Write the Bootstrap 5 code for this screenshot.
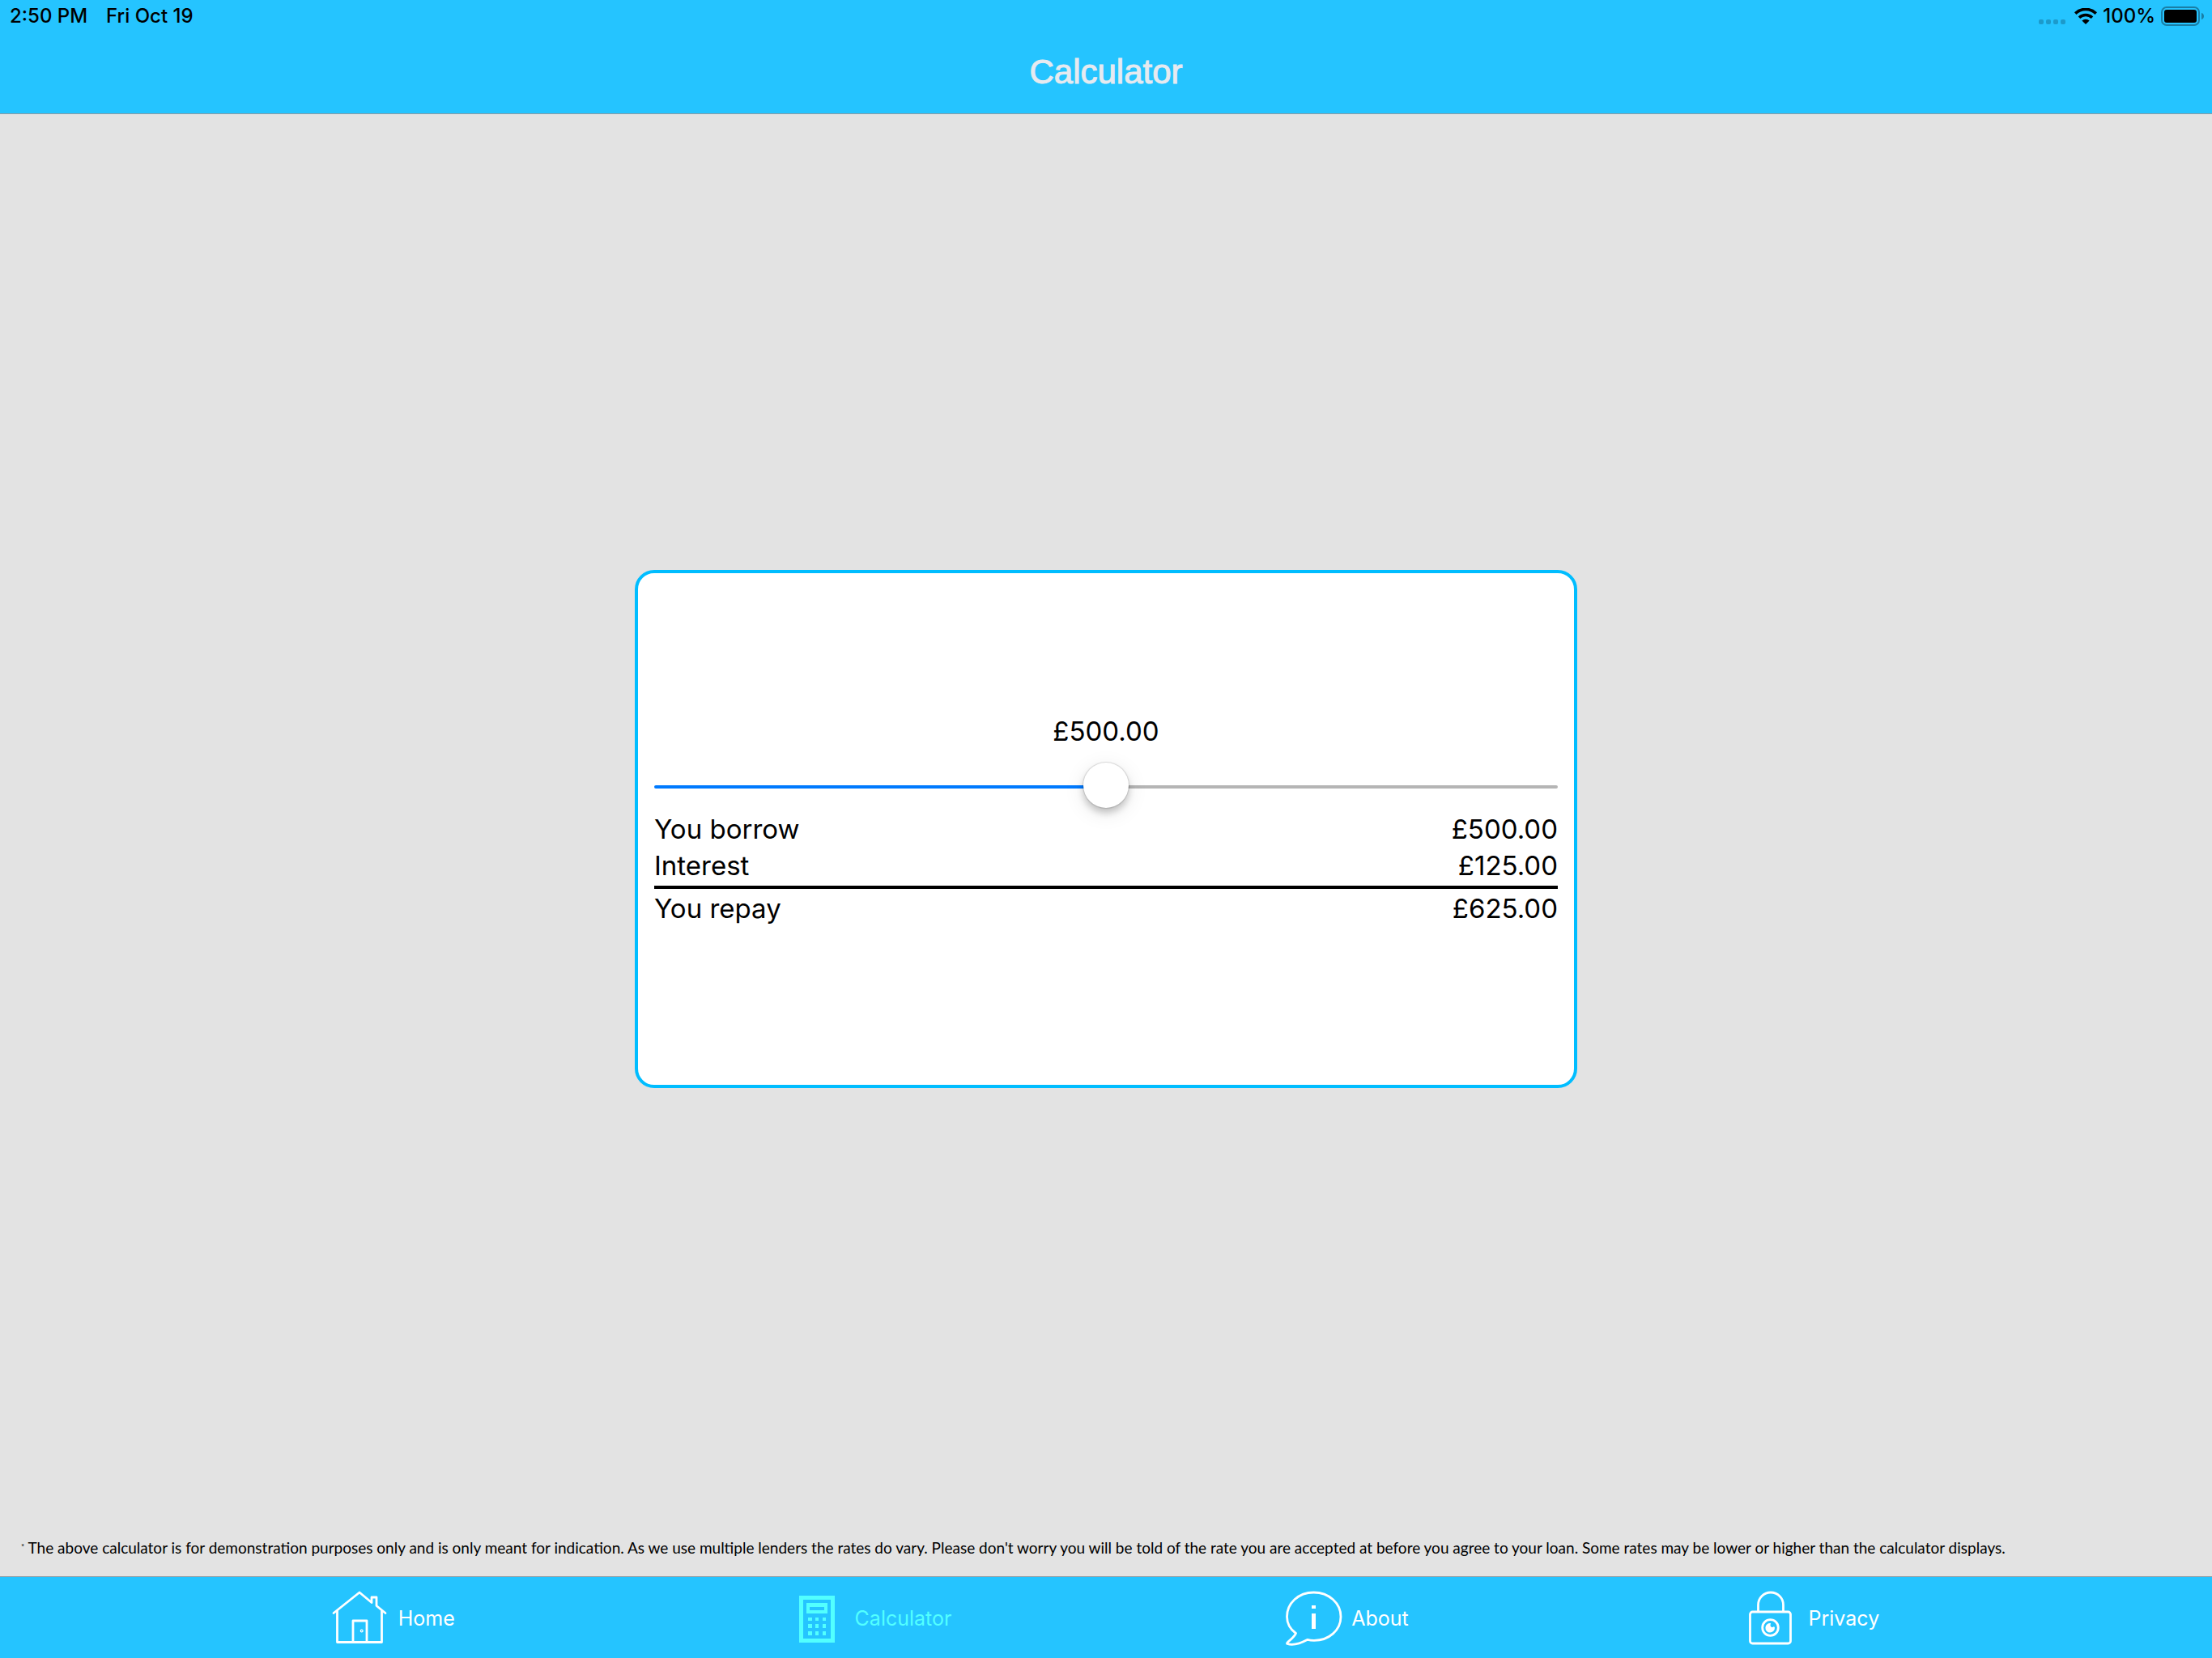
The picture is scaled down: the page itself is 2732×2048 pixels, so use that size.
<!DOCTYPE html>
<html lang="en">
<head>
<meta charset="utf-8">
<meta name="viewport" content="width=device-width, initial-scale=1">
<title>Calculator</title>
<link href="https://cdn.jsdelivr.net/npm/bootstrap@5.3.0/dist/css/bootstrap.min.css" rel="stylesheet">
<style>
  body { background: #e3e3e3; color: #000; font-family: Inter, "Liberation Sans", sans-serif; }
  .bar-blue { background: #25c4ff; }
  .app-header { border-bottom: 1px solid #8d9ba2; }
  .status-line { height: 40px; padding: 0 9px 0 12px; font-size: 24px; line-height: 40px; font-weight: 500; }
  .status-clock { gap: 23px; }
  .status-icons { gap: 7px; }
  .app-title { padding: 25px 0 27px; font-family: "Liberation Sans", sans-serif; font-size: 42px; line-height: 48px; font-weight: 400; color: #e6eaf0; -webkit-text-stroke: 1px #e6eaf0; }
  .stage { padding-top: 8px; }
  .loan-card { width: 1164px; max-width: 100%; min-height: 640px; padding: 0 20px 23px; border: 4px solid #00bdff; border-radius: 24px; font-size: 33px; line-height: 45px; }
  .loan-slider { height: 60px; margin-top: 16px; padding: 0; }
  .loan-slider::-webkit-slider-runnable-track { height: 4px; border-radius: 2px; background: linear-gradient(to right, #007aff var(--fill), #b5b5b5 var(--fill)); }
  .loan-slider::-webkit-slider-thumb, .loan-slider::-webkit-slider-thumb:active { width: 56px; height: 56px; margin-top: -28px; border-radius: 50%; background: #fff; box-shadow: 0 0 1px 1px rgba(0,0,0,.12), 0 6px 8px rgba(0,0,0,.2), 0 6px 26px rgba(0,0,0,.1); }
  .loan-slider::-moz-range-track { height: 4px; background: linear-gradient(to right, #007aff var(--fill), #b5b5b5 var(--fill)); }
  .loan-slider::-moz-range-thumb { width: 56px; height: 56px; border-radius: 50%; background: #fff; box-shadow: 0 6px 8px rgba(0,0,0,.2); }
  .loan-table th { font-weight: 400; }
  .loan-table th, .loan-table td { padding: 0; }
  .loan-table tbody tr:last-child > * { padding-bottom: 2px; }
  .loan-table tfoot > tr > * { border-top: 4px solid #000; padding-top: 2px; }
  .disclaimer { margin: 0; padding: 1px 26px 23px; font-family: Lato, "Noto Sans", sans-serif; font-size: 19px; line-height: 24px; }
  .disclaimer sup { font-size: 10px; }
  .tab-bar { border-top: 1px solid #8d9ba2; }
  .tab-link { height: 100px; padding: 2px 2px 0 0; gap: 11px; color: #fff; font-size: 25px; line-height: 32px; font-weight: 400; }
  .tab-link.active { color: #52ffff; }
</style>
<script src="https://cdn.jsdelivr.net/npm/bootstrap@5.3.0/dist/js/bootstrap.bundle.min.js"></script>
</head>
<body class="d-flex flex-column min-vh-100">
  <header class="app-header bar-blue">
    <div class="status-line d-flex justify-content-between">
      <div class="status-clock d-flex"><span>2:50 PM</span><span>Fri Oct 19</span></div>
      <div class="status-icons d-flex align-items-center">
        <svg width="38" height="24" viewBox="0 0 38 24" fill="#1c9acb" aria-hidden="true"><rect x="1" y="16" width="6" height="6" rx="2"/><rect x="10" y="16" width="6" height="6" rx="2"/><rect x="19" y="16" width="6" height="6" rx="2"/><rect x="28" y="16" width="6" height="6" rx="2"/></svg>
        <svg width="28" height="20" viewBox="0 0 28 20" aria-hidden="true"><g fill="none" stroke="#000" stroke-width="3.6"><path d="M1.2 6.6a18.4 18.4 0 0 1 25.6 0"/><path d="M6 11.7a11.5 11.5 0 0 1 16 0"/></g><path d="M9.4 15.6a6.6 6.6 0 0 1 9.2 0L14 20z"/></svg>
        <span>100%</span>
        <svg width="54" height="24" viewBox="0 0 54 24" aria-hidden="true"><rect x="1" y="1" width="46" height="22" rx="6" fill="none" stroke="#1a7ea6" stroke-width="2"/><rect x="4" y="4" width="40" height="16" rx="3"/><path d="M50 8c4 1 4 7 0 8z" fill="#1a7ea6"/></svg>
      </div>
    </div>
    <h1 class="app-title text-center m-0">Calculator</h1>
  </header>

  <main class="flex-grow-1 d-flex flex-column">
    <div class="stage flex-grow-1 d-flex align-items-center justify-content-center">
      <section class="loan-card bg-white d-flex flex-column justify-content-center">
        <label class="text-center" for="amount">£500.00</label>
        <input class="loan-slider form-range" type="range" id="amount" min="0" max="1000" value="500" style="--fill: 50%">
        <table class="loan-table w-100">
          <tbody>
            <tr><th scope="row">You borrow</th><td class="text-end">£500.00</td></tr>
            <tr><th scope="row">Interest</th><td class="text-end">£125.00</td></tr>
          </tbody>
          <tfoot>
            <tr><th scope="row">You repay</th><td class="text-end">£625.00</td></tr>
          </tfoot>
        </table>
      </section>
    </div>
    <p class="disclaimer"><sup>*</sup> The above calculator is for demonstration purposes only and is only meant for indication. As we use multiple lenders the rates do vary. Please don't worry you will be told of the rate you are accepted at before you agree to your loan. Some rates may be lower or higher than the calculator displays.</p>
  </main>

  <nav class="tab-bar bar-blue d-flex justify-content-evenly" aria-label="Main">
    <a class="tab-link d-flex align-items-center text-decoration-none" href="#home">
      <svg width="72" height="72" viewBox="0 0 72 72" fill="none" stroke="#fff" stroke-width="2.8" stroke-linecap="round" stroke-linejoin="round" aria-hidden="true"><path d="M3 29.500 35 4 50 16.500V10h6V20.500L67 29.500"/><path d="M7.500 27V65.500h55V27M27 65V39H44V65"/><circle cx="37.700" cy="51.500" r=".6"/></svg>
      Home
    </a>
    <a class="tab-link active d-flex align-items-center text-decoration-none" href="#calculator" aria-current="page">
      <svg width="72" height="72" viewBox="0 0 72 72" fill="#52ffff" aria-hidden="true"><path fill-rule="evenodd" d="M14 8H58V66H14ZM19 13V61H53V13ZM23 17H49V30H23ZM27 22V26H45V22Z"/><path d="M25 35h5v4h-5zM34 35h4v4h-4zM43 35h4v4h-4zM25 43h5v5h-5zM34 43h4v5h-4zM43 43h4v5h-4zM25 52h5v5h-5zM34 52h4v5h-4zM43 52h4v5h-4z"/></svg>
      Calculator
    </a>
    <a class="tab-link d-flex align-items-center text-decoration-none" href="#about">
      <svg width="72" height="72" viewBox="0 0 72 72" fill="none" stroke="#fff" stroke-width="2.800" stroke-linejoin="round" aria-hidden="true"><path d="M36.500 4C55.500 4 70 17.500 70 34S55.500 63.300 37 63.300c-3 0-5.500-.3-8-1C23 65.500 12 70 4 67.500c-3-1 8-6.500 10.500-13C7 49 3.500 41.500 3.500 34 3.500 17.500 17.500 4 36.500 4Z"/><path fill="#fff" stroke="none" d="M34 20h5v4h-5zM34 30h5v19h-5z"/></svg>
      About
    </a>
    <a class="tab-link d-flex align-items-center text-decoration-none" href="#privacy">
      <svg width="72" height="72" viewBox="0 0 72 72" fill="none" stroke="#fff" stroke-width="2.800" aria-hidden="true"><path d="M20.500 28V19.500a15.500 15.500 0 0 1 31 0V28"/><rect x="10.500" y="28" width="50" height="39" rx="3"/><circle cx="35.500" cy="47.500" r="9.800"/><path fill="#fff" stroke="none" d="M36 42a5.800 5.800 0 1 0 5 5.500l-1-1.500c-1.500 2-4.500 1-4.500-1.500Z"/></svg>
      Privacy
    </a>
  </nav>
<script>
  const pounds = n => '£' + n.toFixed(2);
  const slider = document.getElementById('amount');
  const cells = document.querySelectorAll('.loan-table td');
  slider.addEventListener('input', () => {
    const n = Number(slider.value);
    slider.style.setProperty('--fill', n / 10 + '%');
    document.querySelector('label[for=amount]').textContent = pounds(n);
    [n, n * .25, n * 1.25].forEach((v, i) => { cells[i].textContent = pounds(v); });
  });
</script>
</body>
</html>
